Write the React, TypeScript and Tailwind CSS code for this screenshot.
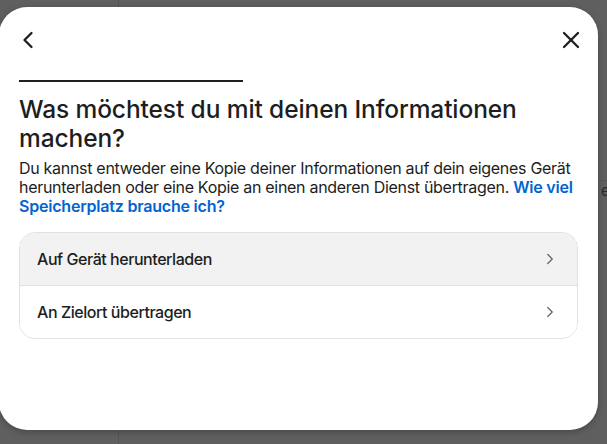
import { ChevronLeft, ChevronRight, X } from 'lucide-react';

const options = ['Auf Gerät herunterladen', 'An Zielort übertragen'];

export default function App() {
  return (
    <div className="relative h-[444px] w-[607px] overflow-hidden bg-[#5f5f5f] font-['Inter','Noto_Sans',sans-serif] text-[#1c1e21]">
      {/* page behind the overlay */}
      <div className="flex h-full w-full">
        <div className="w-[119px] border-r border-[#555555]" />
        <div className="flex flex-1 justify-end">
          <div className="mt-[180px] h-[20px] w-[6px] overflow-hidden border-t border-[#555555] text-[15px] leading-[20px] text-[#2a2a2a]">
            er
          </div>
        </div>
      </div>

      {/* dialog */}
      <div className="absolute left-[-1px] top-[7px] flex h-[423px] w-[599px] flex-col rounded-[28px] bg-white shadow-[0_2px_6px_rgba(0,0,0,0.25)]">
        <div className="flex items-center justify-between pl-[15px] pr-[13px] pt-[19px]">
          <ChevronLeft size={28} strokeWidth={2} className="text-[#1c1e21]" />
          <X size={28} strokeWidth={2} className="text-[#1c1e21]" />
        </div>

        <div className="ml-[20px] mt-[26px] h-[2px] w-[224px] bg-[#1c1e21]" />

        <div className="px-[20px] pt-[13px]">
          <h1 className="text-[24.5px] font-medium leading-[29px] tracking-[-0.1px]">
            Was möchtest du mit deinen Informationen machen?
          </h1>
          <p className="mt-[6px] whitespace-nowrap text-[16px] leading-[19px] tracking-[-0.3px]">
            Du kannst entweder eine Kopie deiner Informationen auf dein eigenes Gerät
            <br />
            herunterladen oder eine Kopie an einen anderen Dienst übertragen.{' '}
            <span className="font-semibold tracking-[-0.2px] text-[#0064d1]">
              Wie viel
              <br />
              Speicherplatz brauche ich?
            </span>
          </p>

          <div className="mt-[16px] overflow-hidden rounded-[16px] border border-[#dfe1e5]">
            {options.map((label, i) => (
              <div
                key={label}
                className={
                  i === 0
                    ? 'flex h-[53px] items-center justify-between border-b border-[#dfe1e5] bg-[#f2f2f2] pl-[17px] pr-[18px]'
                    : 'flex h-[52px] items-center justify-between bg-white pl-[17px] pr-[18px]'
                }
              >
                <span className="text-[16px] font-medium tracking-[-0.45px]">{label}</span>
                <ChevronRight size={18} strokeWidth={1.75} className="text-[#65676b]" />
              </div>
            ))}
          </div>
        </div>
      </div>
    </div>
  );
}
